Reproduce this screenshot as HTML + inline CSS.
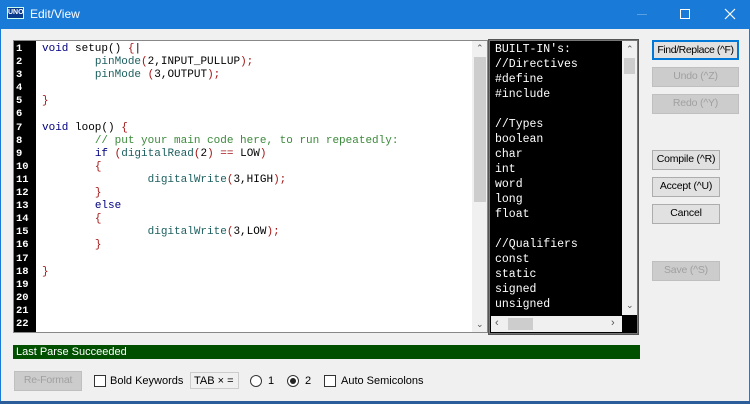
<!DOCTYPE html><html><head><style>
*{margin:0;padding:0;box-sizing:border-box}
body{width:750px;height:404px;overflow:hidden;background:#f0f0f0;font-family:"Liberation Sans",sans-serif;font-size:11px;position:relative}
.a{position:absolute}
.btn{position:absolute;border:1px solid #adadad;background:#e1e1e1;text-align:center;font-size:10.5px;line-height:17px;color:#000;white-space:nowrap;letter-spacing:-0.2px}
.dis{color:#a0a0a0;background:#cccccc;border-color:#bfbfbf}
.k{color:#00007f}.r{color:#a31515}.g{color:#3b8a3b}.t{color:#1e6060}
pre{font-family:"Liberation Mono","DejaVu Sans Mono",monospace;font-size:11px;line-height:13.1px}
</style></head><body>
<div class="a" style="left:0;top:0;width:750px;height:29px;background:#1a7ad8"></div>
<div class="a" style="left:7px;top:7px;width:17px;height:12px;background:#0b3a8a;border:1px solid #cfe;color:#fff;font-size:7px;font-weight:bold;line-height:10px;text-align:center">UNO</div>
<div class="a" style="left:30px;top:7px;color:#fff;font-size:12px;font-family:'Liberation Sans',sans-serif">Edit/View</div>
<div class="a" style="left:637px;top:14px;width:10px;height:1px;background:#5a9fe0"></div>
<div class="a" style="left:680px;top:9px;width:10px;height:10px;border:1px solid #fff"></div>
<svg class="a" style="left:724px;top:8px" width="12" height="12"><path d="M1 1L11 11M11 1L1 11" stroke="#fff" stroke-width="1.2"/></svg>
<div class="a" style="left:0;top:29px;width:1px;height:375px;background:#1a7ad8"></div>
<div class="a" style="left:749px;top:29px;width:1px;height:375px;background:#1a7ad8"></div>
<div class="a" style="left:0;top:401px;width:750px;height:3px;background:#2a5d9a"></div>

<div class="a" style="left:13px;top:40px;width:475px;height:293px;border:1px solid #888;background:#fff"></div>
<div class="a" style="left:14px;top:41px;width:22px;height:291px;background:#000"></div>
<pre class="a" style="left:16px;top:43px;color:#fff;font-weight:bold;font-size:10.5px">1
2
3
4
5
6
7
8
9
10
11
12
13
14
15
16
17
18
19
20
21
22</pre>
<pre class="a" style="left:42px;top:43px"><span class="k">void</span> setup() <span class="r">{</span>|
        <span class="t">pinMode</span><span class="r">(</span>2,INPUT_PULLUP<span class="r">);</span>
        <span class="t">pinMode</span> <span class="r">(</span>3,OUTPUT<span class="r">);</span>

<span class="r">}</span>

<span class="k">void</span> loop() <span class="r">{</span>
        <span class="g">// put your main code here, to run repeatedly:</span>
        <span class="k">if</span> <span class="r">(</span><span class="t">digitalRead</span><span class="r">(</span>2<span class="r">)</span> <span class="r">==</span> LOW<span class="r">)</span>
        <span class="r">{</span>
                <span class="t">digitalWrite</span><span class="r">(</span>3,HIGH<span class="r">);</span>
        <span class="r">}</span>
        <span class="k">else</span>
        <span class="r">{</span>
                <span class="t">digitalWrite</span><span class="r">(</span>3,LOW<span class="r">);</span>
        <span class="r">}</span>

<span class="r">}</span></pre>
<div class="a" style="left:472px;top:41px;width:15px;height:291px;background:#f0f0f0"></div>
<div class="a" style="left:474px;top:57px;width:12px;height:145px;background:#cdcdcd"></div>
<div class="a" style="left:476px;top:43px;font-size:9px;color:#555">&#8963;</div>
<div class="a" style="left:476px;top:319px;font-size:9px;color:#555">&#8964;</div>

<div class="a" style="left:489px;top:40px;width:149px;height:294px;background:#000;border:1px solid #777;outline:1px solid #555"></div>
<pre class="a" style="left:495px;top:42px;color:#fff;line-height:15px;font-size:11.5px">BUILT-IN's:
//Directives
#define
#include

//Types
boolean
char
int
word
long
float

//Qualifiers
const
static
signed
unsigned</pre>
<div class="a" style="left:622px;top:41px;width:15px;height:274px;background:#f0f0f0"></div>
<div class="a" style="left:624px;top:58px;width:11px;height:16px;background:#cdcdcd"></div>
<div class="a" style="left:626px;top:44px;font-size:9px;color:#555">&#8963;</div>
<div class="a" style="left:626px;top:300px;font-size:9px;color:#555">&#8964;</div>
<div class="a" style="left:491px;top:316px;width:131px;height:16px;background:#f0f0f0"></div>
<div class="a" style="left:508px;top:318px;width:25px;height:12px;background:#cdcdcd"></div>
<div class="a" style="left:495px;top:317px;font-size:11px;color:#555">&lsaquo;</div>
<div class="a" style="left:611px;top:317px;font-size:11px;color:#555">&rsaquo;</div>

<div class="btn" style="left:652px;top:40px;width:87px;height:20px;border:2px solid #0078d7;line-height:16px;letter-spacing:-0.4px">Find/Replace (^F)</div>
<div class="btn dis" style="left:652px;top:67px;width:87px;height:20px">Undo (^Z)</div>
<div class="btn dis" style="left:652px;top:94px;width:87px;height:20px">Redo (^Y)</div>
<div class="btn" style="left:652px;top:150px;width:68px;height:20px">Compile (^R)</div>
<div class="btn" style="left:652px;top:177px;width:68px;height:20px">Accept (^U)</div>
<div class="btn" style="left:652px;top:204px;width:68px;height:20px">Cancel</div>
<div class="btn dis" style="left:652px;top:261px;width:68px;height:20px">Save (^S)</div>

<div class="a" style="left:13px;top:345px;width:627px;height:14px;background:#005000;color:#fff;font-size:11px;line-height:14px;padding-left:3px">Last Parse Succeeded</div>

<div class="btn dis" style="left:14px;top:371px;width:68px;height:20px">Re-Format</div>
<div class="a" style="left:94px;top:375px;width:12px;height:12px;border:1px solid #333;background:#fff"></div>
<div class="a" style="left:110px;top:375px">Bold Keywords</div>
<div class="a" style="left:190px;top:372px;width:49px;height:17px;border:1px solid #ccc;background:#f0f0f0;padding:2px 0 0 3px">TAB × =</div>
<div class="a" style="left:250px;top:375px;width:12px;height:12px;border:1px solid #333;border-radius:50%;background:#fff"></div>
<div class="a" style="left:268px;top:375px">1</div>
<div class="a" style="left:287px;top:375px;width:12px;height:12px;border:1px solid #333;border-radius:50%;background:#fff"></div>
<div class="a" style="left:290px;top:378px;width:6px;height:6px;border-radius:50%;background:#222"></div>
<div class="a" style="left:305px;top:375px">2</div>
<div class="a" style="left:324px;top:375px;width:12px;height:12px;border:1px solid #333;background:#fff"></div>
<div class="a" style="left:341px;top:375px">Auto Semicolons</div>
</body></html>
